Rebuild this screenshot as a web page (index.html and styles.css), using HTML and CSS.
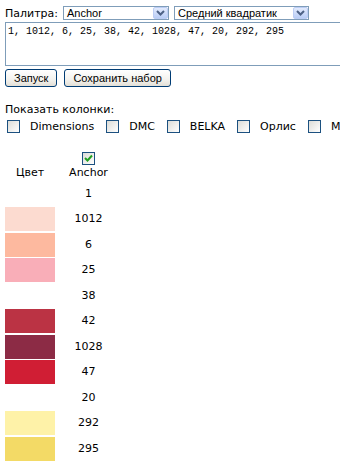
FILE: index.html
```html
<!DOCTYPE html>
<html lang="ru">
<head>
    <meta charset="UTF-8">
    <meta name="viewport" content="width=device-width, initial-scale=1.0">
    <title>Палитра</title>
    <link rel="stylesheet" href="styles.css">
</head>
<body>
    <div class="toolbar">
        <span class="caption">Палитра:</span>
        <div class="select palette">
            <span class="value">Anchor</span>
            <span class="arrow"><svg width="9" height="6" viewBox="0 0 9 6"><polyline points="1,1 4.5,4.5 8,1" fill="none" stroke="#4d6185" stroke-width="2"/></svg></span>
        </div>
        <div class="select method">
            <span class="value">Средний квадратик</span>
            <span class="arrow"><svg width="9" height="6" viewBox="0 0 9 6"><polyline points="1,1 4.5,4.5 8,1" fill="none" stroke="#4d6185" stroke-width="2"/></svg></span>
        </div>
    </div>

    <div class="codes">1, 1012, 6, 25, 38, 42, 1028, 47, 20, 292, 295</div>

    <div class="actions">
        <button class="btn" type="button">Запуск</button>
        <button class="btn" type="button">Сохранить набор</button>
    </div>

    <div class="columns-title">Показать колонки:</div>
    <div class="columns">
        <label class="opt"><span class="box"></span>Dimensions</label>
        <label class="opt"><span class="box"></span>DMC</label>
        <label class="opt"><span class="box"></span>BELKA</label>
        <label class="opt"><span class="box"></span>Орлис</label>
        <label class="opt"><span class="box"></span>Madeira</label>
    </div>

    <div class="result">
        <div class="row head">
            <div class="cell color">Цвет</div>
            <div class="cell num">
                <span class="box checked"><svg width="9" height="8" viewBox="0 0 9 8"><polyline points="1,4 3.5,6.5 8,1.5" fill="none" stroke="#21a121" stroke-width="2"/></svg></span>
                Anchor
            </div>
        </div>
        <div class="row"><div class="swatch" style="background:#ffffff"></div><div class="num">1</div></div>
        <div class="row"><div class="swatch" style="background:#fcdbd0"></div><div class="num">1012</div></div>
        <div class="row"><div class="swatch" style="background:#fdb99f"></div><div class="num">6</div></div>
        <div class="row"><div class="swatch" style="background:#f9aeb8"></div><div class="num">25</div></div>
        <div class="row"><div class="swatch" style="background:#ffffff"></div><div class="num">38</div></div>
        <div class="row"><div class="swatch" style="background:#bb3344"></div><div class="num">42</div></div>
        <div class="row"><div class="swatch" style="background:#8c2b45"></div><div class="num">1028</div></div>
        <div class="row"><div class="swatch" style="background:#d01e34"></div><div class="num">47</div></div>
        <div class="row"><div class="swatch" style="background:#ffffff"></div><div class="num">20</div></div>
        <div class="row"><div class="swatch" style="background:#fef2a8"></div><div class="num">292</div></div>
        <div class="row"><div class="swatch" style="background:#f3da66"></div><div class="num">295</div></div>
    </div>
</body>
</html>
```

FILE: styles.css
```css
html, body {
    overflow: hidden;
}
body {
    margin: 0;
    padding: 6px 0 0 5px;
    background-color: #fff;
    color: #000;
    font-family: "DejaVu Sans", Verdana, sans-serif;
    font-size: 11px;
}
.toolbar {
    display: flex;
    align-items: center;
    height: 14px;
    white-space: nowrap;
}
.caption {
    margin-right: 5px;
}
.select {
    display: flex;
    align-items: center;
    justify-content: space-between;
    box-sizing: border-box;
    height: 14px;
    margin-right: 5px;
    border: 1px solid #7f9db9;
    font-family: "Liberation Sans", Arial, sans-serif;
    font-size: 11px;
}
.select .value {
    padding-left: 3px;
}
.select .arrow {
    display: flex;
    align-items: center;
    justify-content: center;
    box-sizing: border-box;
    width: 15px;
    height: 12px;
    border: 1px solid #bccdf4;
    border-radius: 2px;
    background: linear-gradient(#e3ebfd, #b9cdf6);
}
.palette {
    width: 106px;
}
.method {
    width: 135px;
}
.codes {
    box-sizing: border-box;
    width: 360px;
    height: 44px;
    margin-top: 2px;
    padding: 3px 2px;
    border: 1px solid #7f9db9;
    font-family: "Liberation Mono", "Courier New", monospace;
    font-size: 10px;
    line-height: 12px;
    white-space: nowrap;
}
.actions {
    display: flex;
    gap: 7px;
    margin-top: 3px;
}
.btn {
    height: 18px;
    padding: 0 8px;
    border: 1px solid #003c74;
    border-radius: 3px;
    background: linear-gradient(#ffffff, #f3f2ee 60%, #e3dfd6);
    color: #000;
    font-family: "Liberation Sans", Arial, sans-serif;
    font-size: 11px;
    line-height: 16px;
}
.columns-title {
    margin-top: 16px;
    line-height: 14px;
}
.columns {
    display: flex;
    align-items: center;
    height: 18px;
    padding-left: 2px;
    white-space: nowrap;
}
.opt {
    display: flex;
    align-items: center;
    margin-right: 12px;
}
.box {
    display: inline-flex;
    align-items: center;
    justify-content: center;
    box-sizing: border-box;
    width: 13px;
    height: 13px;
    border: 1px solid #1c5180;
    background: linear-gradient(135deg, #dcdcd7, #ffffff);
}
.opt .box {
    margin-right: 10px;
}
.result {
    margin-top: 16px;
}
.row {
    display: flex;
    gap: 2px;
    height: 25.5px;
}
.row.head {
    height: 30.5px;
}
.head .cell {
    display: flex;
    flex-direction: column;
    align-items: center;
    justify-content: flex-end;
    line-height: 14px;
    padding-bottom: 2px;
}
.head .box {
    margin-bottom: 1px;
}
.color,
.swatch {
    width: 50px;
}
.swatch {
    height: 24px;
}
.num {
    width: 63px;
    text-align: center;
    line-height: 24px;
}
```
